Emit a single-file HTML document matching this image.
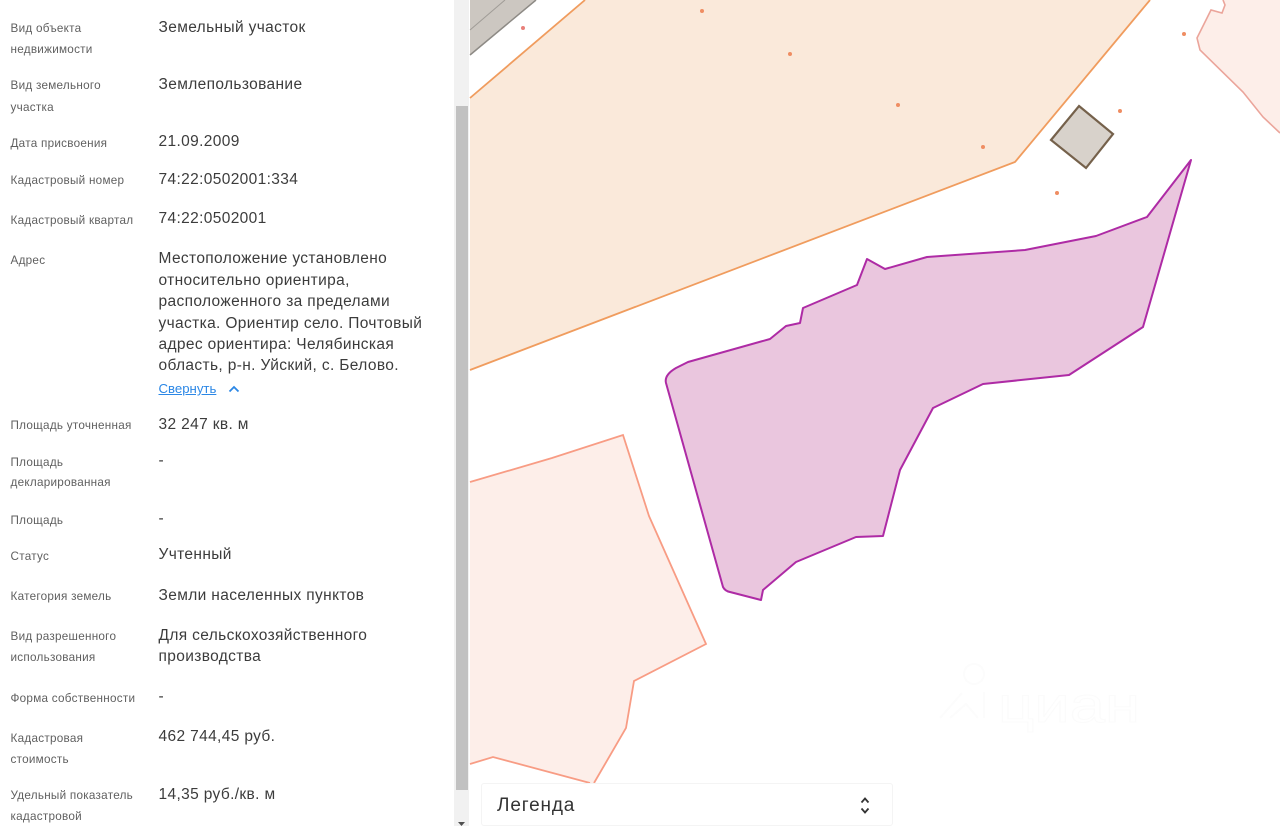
<!DOCTYPE html>
<html lang="ru"><head><meta charset="utf-8"><title>Участок</title>
<style>
html,body{margin:0;padding:0;width:1280px;height:826px;overflow:hidden;background:#fff;font-family:"Liberation Sans",sans-serif}
.l,.v{position:absolute;white-space:nowrap;margin-top:1px}
.l{left:10.5px;font-size:11.7px;line-height:20px;color:#5f5f5f;letter-spacing:.27px}
.v{left:158.5px;font-size:15.5px;line-height:20px;color:#3c3c3c;letter-spacing:.36px}
.a{position:absolute;left:158.5px;top:389px;margin-top:-10px;font-size:13.2px;line-height:20px;color:#2b87e6;text-decoration:underline}
#map{position:absolute;left:0;top:0}
#track{position:absolute;left:454px;top:0;width:15px;height:826px;background:#f1f1f1}
#thumb{position:absolute;left:455.5px;top:106px;width:12.5px;height:684px;background:#c1c1c1}
#lg{position:absolute;left:481px;top:783px;height:43px;background:#fff;border:1px solid #f4f4f4;border-radius:3px;box-sizing:border-box;width:412px}
#lg span{position:absolute;left:15px;top:10.5px;font-size:19px;line-height:22px;color:#333;letter-spacing:.85px}
</style></head><body>
<svg id="map" width="1280" height="826" viewBox="0 0 1280 826">
<polygon points="470,55 536,0 470,0" fill="#ccc7c1"/>
<line x1="470" y1="55" x2="536" y2="0" stroke="#8d8a85" stroke-width="1.5"/>
<line x1="470" y1="30" x2="505" y2="0" stroke="#a09c97" stroke-width="1"/>
<polygon points="470,98 585,0 1150,0 1015,162 470,370" fill="#fae9da"/>
<polyline points="470,98 585,0" fill="none" stroke="#f09c5e" stroke-width="1.8"/>
<polyline points="1150,0 1015,162 470,370" fill="none" stroke="#f09c5e" stroke-width="1.8"/>
<polygon points="470,482 552,458 623,435 649,516 706,644 634,681 626,728 594,783 590,783 493,757 470,764" fill="#fdeee9"/>
<polyline points="470,482 552,458 623,435 649,516 706,644 634,681 626,728 594,783" fill="none" stroke="#f89c84" stroke-width="1.8"/>
<polyline points="470,764 493,757 590,783" fill="none" stroke="#f89c84" stroke-width="1.8"/>
<polygon points="1223,0 1225,5 1222,13 1211,10 1197,38 1200,50 1243,92 1263,117 1280,133 1280,0" fill="#fdeee9"/>
<polyline points="1223,0 1225,5 1222,13 1211,10 1197,38 1200,50 1243,92 1263,117 1280,133" fill="none" stroke="#eba59b" stroke-width="1.6"/>
<polygon points="1079,106 1113,134 1086,168 1051,140" fill="#d8d2cb" stroke="#75614b" stroke-width="2.2"/>
<path d="M1191 160L1147 217 1096 236 1025 250 927 257 885 269 867 259 857 285 803 308 800 323 786 326 770 339 688 362 676 368Q664 375 666 383L723 587Q725 591 730 592L761 600 763 590 796 562 856 537 883 536 900 470 933 408 983 384 1069 375 1143 327Z" fill="#eac6de" stroke="#ae2ba5" stroke-width="2" stroke-linejoin="round"/>
<g fill="#ef8d62"><circle cx="523" cy="28" r="2" fill="#e8807a"/><circle cx="702" cy="11" r="2"/><circle cx="790" cy="54" r="2"/><circle cx="898" cy="105" r="2"/><circle cx="983" cy="147" r="2"/><circle cx="1057" cy="193" r="2"/><circle cx="1120" cy="111" r="2"/><circle cx="1184" cy="34" r="2"/></g>
<g fill="none" stroke="#fcfcfc" stroke-width="2"><circle cx="974" cy="674" r="10"/><path d="M940 718l22-25M984 692v26M950 718l16-14 12 14"/></g>
<text x="998" y="722" font-family="Liberation Sans,sans-serif" font-size="50" fill="#fff" stroke="#fbfbfb" stroke-width="1" textLength="142" lengthAdjust="spacingAndGlyphs">циан</text>
</svg>
<div id="track"></div><div id="thumb"></div>
<svg style="position:absolute;left:456px;top:821px" width="11" height="5"><polygon points="2,1 9,1 5.5,5" fill="#505050"/></svg>

<div class="l" style="top:18px">Вид объекта</div><div class="l" style="top:39px">недвижимости</div>
<div class="v" style="top:17px">Земельный участок</div>
<div class="l" style="top:75px">Вид земельного</div><div class="l" style="top:97px">участка</div>
<div class="v" style="top:74px">Землепользование</div>
<div class="l" style="top:133px">Дата присвоения</div><div class="v" style="top:131px">21.09.2009</div>
<div class="l" style="top:170px">Кадастровый номер</div><div class="v" style="top:169px">74:22:0502001:334</div>
<div class="l" style="top:210px">Кадастровый квартал</div><div class="v" style="top:208px">74:22:0502001</div>
<div class="l" style="top:250px">Адрес</div>
<div class="v" style="top:248px">Местоположение установлено</div>
<div class="v" style="top:270px">относительно ориентира,</div>
<div class="v" style="top:291px">расположенного за пределами</div>
<div class="v" style="top:313px">участка. Ориентир село. Почтовый</div>
<div class="v" style="top:334px">адрес ориентира: Челябинская</div>
<div class="v" style="top:355px">область, р-н. Уйский, с. Белово.</div>
<div class="a">Свернуть</div>
<svg style="position:absolute;left:228px;top:385px" width="12" height="8"><path d="M1.500 6.500L6 2l4.500 4.500" fill="none" stroke="#2b87e6" stroke-width="1.800"/></svg>
<div class="l" style="top:415px">Площадь уточненная</div><div class="v" style="top:414px">32 247 кв. м</div>
<div class="l" style="top:452px">Площадь</div><div class="l" style="top:472px">декларированная</div><div class="v" style="top:450px">-</div>
<div class="l" style="top:510px">Площадь</div><div class="v" style="top:508px">-</div>
<div class="l" style="top:546px">Статус</div><div class="v" style="top:544px">Учтенный</div>
<div class="l" style="top:586px">Категория земель</div><div class="v" style="top:585px">Земли населенных пунктов</div>
<div class="l" style="top:626px">Вид разрешенного</div><div class="l" style="top:647px">использования</div>
<div class="v" style="top:625px">Для сельскохозяйственного</div><div class="v" style="top:646px">производства</div>
<div class="l" style="top:688px">Форма собственности</div><div class="v" style="top:686px">-</div>
<div class="l" style="top:728px">Кадастровая</div><div class="l" style="top:749px">стоимость</div><div class="v" style="top:726px">462 744,45 руб.</div>
<div class="l" style="top:785px">Удельный показатель</div><div class="l" style="top:806px">кадастровой</div><div class="v" style="top:784px">14,35 руб./кв. м</div>

<div id="lg"><span>Легенда</span>
<svg style="position:absolute;left:377px;top:12px" width="12" height="19"><path d="M2.500 6.500L6 2.500l3.500 4M2.500 12.500L6 16.500l3.500-4" fill="none" stroke="#333" stroke-width="1.800"/></svg>
</div>
</body></html>
